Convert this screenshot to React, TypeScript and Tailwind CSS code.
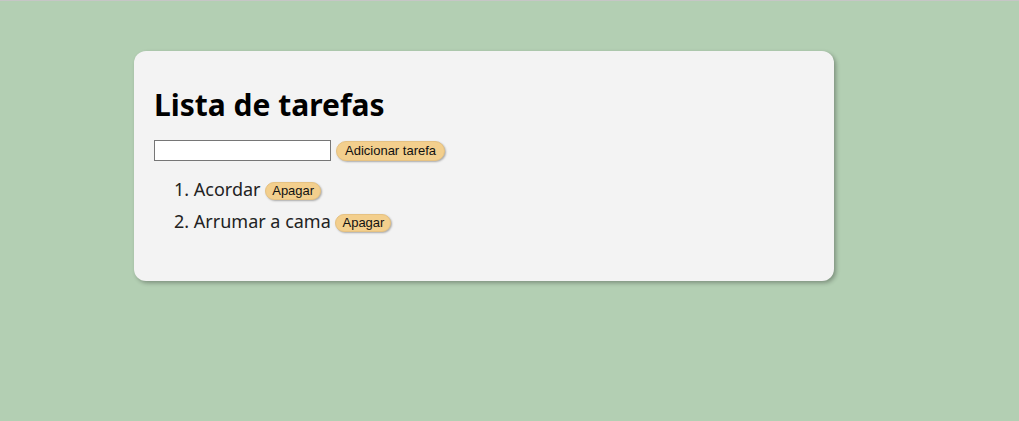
import { useState } from "react"

export default function App() {
  const [tarefas, setTarefas] = useState<string[]>(["Acordar", "Arrumar a cama"])
  const [texto, setTexto] = useState("")

  const adicionar = () => {
    if (!texto.trim()) return
    setTarefas([...tarefas, texto])
    setTexto("")
  }

  const apagar = (i: number) => setTarefas(tarefas.filter((_, idx) => idx !== i))

  return (
    <div className="min-h-[421px] bg-[#b3cfb3] border-t border-[#c6c6c6] pt-[50px] pl-[134px]">
      <div className="w-[700px] min-h-[230px] rounded-[12px] bg-[#f3f3f3] px-5 pt-[34px] pb-5 shadow-[2px_2px_4px_rgba(0,0,0,0.3)]">
        <h2 className="text-[30px] leading-[40px] font-bold text-black font-['Noto_Sans',sans-serif]">
          Lista de tarefas
        </h2>

        <div className="mt-[15px] flex items-center gap-[5px]">
          <input
            value={texto}
            onChange={(e) => setTexto(e.target.value)}
            className="w-[177px] h-[21px] bg-white border border-[#767676] px-1 text-[13px] font-['Liberation_Sans',sans-serif]"
          />
          <button
            onClick={adicionar}
            className="h-[20px] px-[8px] rounded-full bg-[#f3cf8d] border border-[#e6c282] text-[13px] leading-[18px] text-[#111] font-['Liberation_Sans',sans-serif] shadow-[1px_1px_2px_rgba(0,0,0,0.3)]"
          >
            Adicionar tarefa
          </button>
        </div>

        <ol className="mt-[16px] pl-[20px] list-decimal list-inside flex flex-col gap-[8px] text-[18px] leading-[24px] text-[#222] font-['Noto_Sans',sans-serif]">
          {tarefas.map((t, i) => (
            <li key={i}>
              {t}{" "}
              <button
                onClick={() => apagar(i)}
                className="h-[18px] px-[6px] rounded-full bg-[#f3cf8d] border border-[#e6c282] text-[13px] leading-[16px] text-[#111] align-middle font-['Liberation_Sans',sans-serif] shadow-[1px_1px_2px_rgba(0,0,0,0.3)]"
              >
                Apagar
              </button>
            </li>
          ))}
        </ol>
      </div>
    </div>
  )
}
